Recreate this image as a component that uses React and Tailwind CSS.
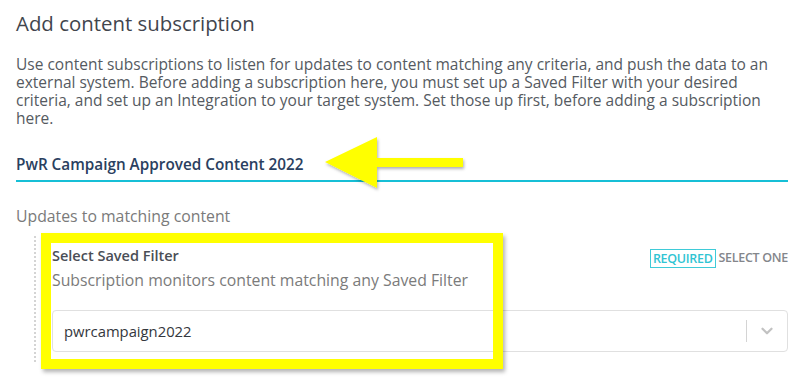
import { ChevronDown } from 'lucide-react';

const Arrow = () => (
    <svg className="absolute left-[318px] top-[132px]" width="152" height="62" viewBox="0 0 152 62">
        <defs>
            <filter id="sh" x="-10%" y="-20%" width="130%" height="150%">
                <feDropShadow dx="1" dy="2" stdDeviation="1.5" floodColor="#000" floodOpacity="0.3" />
            </filter>
        </defs>
        <polygon
            points="7,30 59,5 59,26 145,26 145,35 59,35 59,56"
            fill="#ffff00"
            filter="url(#sh)"
        />
    </svg>
);

const lines = [
    'Use content subscriptions to listen for updates to content matching any criteria, and push the data to an',
    'external system. Before adding a subscription here, you must set up a Saved Filter with your desired',
    'criteria, and set up an Integration to your target system. Set those up first, before adding a subscription',
    'here.',
];

const App = () => {
    return (
        <div className="relative w-[808px] h-[382px] bg-white overflow-hidden font-['Open_Sans',sans-serif] pl-4 pr-5">
            <h1 className="pt-[9px] text-[20.4px] leading-[28px] text-[#41454d]">Add content subscription</h1>

            <p className="mt-[18px] text-[15.5px] leading-[18px] text-[#555a61]">
                {lines.map((l) => (
                    <span key={l} className="block whitespace-nowrap">{l}</span>
                ))}
            </p>

            <div className="mt-[27px] pb-[6px] border-b-2 border-[#16bfd6]">
                <h2 className="text-[15.3px] leading-[20px] font-semibold text-[#2a4060]">PwR Campaign Approved Content 2022</h2>
            </div>

            <h3 className="mt-[24px] text-[15.8px] leading-[20px] text-[#7a7a7a]">Updates to matching content</h3>

            <div className="mt-[10px] ml-[18px] border-l-2 border-dotted border-[#d4d4d4] pl-4 pt-[10px] pb-[10px]">
                <div className="flex items-start justify-between">
                    <div>
                        <div className="text-[14.5px] leading-[20px] font-semibold text-[#4a4e56]">Select Saved Filter</div>
                        <div className="mt-[4px] text-[15.8px] leading-[20px] text-[#7b7b7b]">
                            Subscription monitors content matching any Saved Filter
                        </div>
                    </div>
                    <div className="flex items-center gap-[3px] mt-[3px] text-[12.5px] font-semibold tracking-[-0.3px]">
                        <span className="border border-[#3fcbd8] px-[2px] leading-[17px] text-[#30c4d3]">REQUIRED</span>
                        <span className="text-[#84868b]">SELECT ONE</span>
                    </div>
                </div>

                <div className="mt-[20px] h-[42px] flex items-center border border-[#e0e0e0] rounded-[4px]">
                    <span className="flex-1 pl-[11px] text-[14.8px] text-[#34373d]">pwrcampaign2022</span>
                    <span className="w-px h-[22px] bg-[#d4d4d4]"></span>
                    <span className="w-[40px] flex justify-center">
                        <ChevronDown size={18} strokeWidth={3} className="text-[#c2c2c2]" />
                    </span>
                </div>
            </div>

            {/* annotations */}
            <div className="absolute left-[41px] top-[233px] w-[462px] h-[136px] border-[10px] border-[#ffff00] shadow-[2px_3px_4px_rgba(0,0,0,0.3)]"></div>
            <Arrow />
        </div>
    );
};

export default App;
